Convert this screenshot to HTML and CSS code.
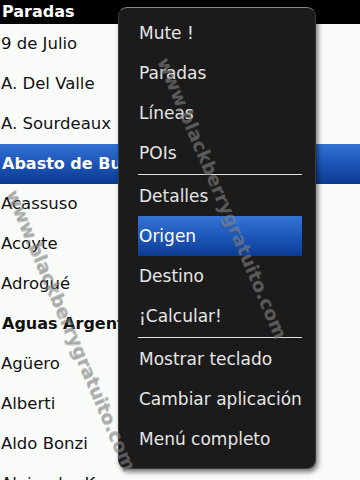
FILE: index.html
```html
<!DOCTYPE html>
<html lang="es">
<head>
    <meta charset="UTF-8">
    <meta name="viewport" content="width=device-width, initial-scale=1.0">
    <title>Paradas</title>
    <link rel="stylesheet" href="styles.css">
</head>
<body>
    <div class="screen">
        <div class="titlebar">Paradas</div>
        <ul class="list">
            <li>9 de Julio</li>
            <li>A. Del Valle</li>
            <li>A. Sourdeaux</li>
            <li class="group selected">Abasto de Buenos Aires</li>
            <li>Acassuso</li>
            <li>Acoyte</li>
            <li>Adrogué</li>
            <li class="group">Aguas Argentinas</li>
            <li>Agüero</li>
            <li>Alberti</li>
            <li>Aldo Bonzi</li>
            <li>Alejandro Korn</li>
        </ul>

        <div class="menu">
            <div class="item">Mute !</div>
            <div class="item">Paradas</div>
            <div class="item">Líneas</div>
            <div class="item">POIs</div>
            <div class="sep"></div>
            <div class="item">Detalles</div>
            <div class="item active">Origen</div>
            <div class="item">Destino</div>
            <div class="item">¡Calcular!</div>
            <div class="sep"></div>
            <div class="item">Mostrar teclado</div>
            <div class="item">Cambiar aplicación</div>
            <div class="item">Menú completo</div>
        </div>

        <span class="watermark wm-left">www.blackberrygratuito.com</span>
        <span class="watermark wm-menu">www.blackberrygratuito.com</span>
    </div>
</body>
</html>
```

FILE: styles.css
```css
body {
    margin: 0;
    padding: 0;
    font-family: 'DejaVu Sans', 'Noto Sans', sans-serif;
    background-color: #f9fbf9;
}
.screen {
    position: relative;
    width: 360px;
    height: 480px;
    overflow: hidden;
    background-color: #f9fbf9;
}
.titlebar {
    height: 24px;
    line-height: 23px;
    padding-left: 2px;
    background-color: #000;
    color: #fff;
    font-weight: bold;
    font-size: 16px;
}
.list {
    list-style: none;
    margin: 0;
    padding: 0;
}
.list li {
    height: 40px;
    line-height: 40px;
    padding-left: 1px;
    font-size: 16.5px;
    color: #111;
    white-space: nowrap;
    overflow: hidden;
}
.list li.group {
    font-weight: bold;
    font-size: 16px;
    padding-left: 2px;
}
.list li.selected {
    color: #fff;
    background: linear-gradient(#3272d4, #1a52b4 55%, #0b3a8e);
}
.menu {
    position: absolute;
    left: 118px;
    top: 7px;
    width: 164px;
    padding: 5px 13px 9px 19px;
    background-color: #1b1b1b;
    border: 1px solid #3a3a3a;
    border-top-color: #8a8a8a;
    border-radius: 9px;
    box-shadow: 2px 3px 5px rgba(0, 0, 0, 0.55);
    color: #e6e6e6;
    font-size: 17px;
}
.menu .item {
    height: 40px;
    line-height: 40px;
    padding-left: 1px;
    white-space: nowrap;
}
.menu .item.active {
    color: #fff;
    background: linear-gradient(#3474d6, #1c55b8 55%, #0c3c92);
}
.menu .sep {
    height: 1px;
    margin: 1px 0;
    background-color: #e0e0e0;
}
.watermark {
    position: absolute;
    transform-origin: 0 50%;
    transform: rotate(67deg);
    font-size: 18.5px;
    font-weight: bold;
    white-space: nowrap;
    color: rgba(140, 140, 140, 0.55);
    text-shadow: 1px 1px 0 rgba(60, 60, 60, 0.25);
    pointer-events: none;
}
.wm-left {
    left: 12px;
    top: 180px;
}
.wm-menu {
    left: 163px;
    top: 48px;
}
```
